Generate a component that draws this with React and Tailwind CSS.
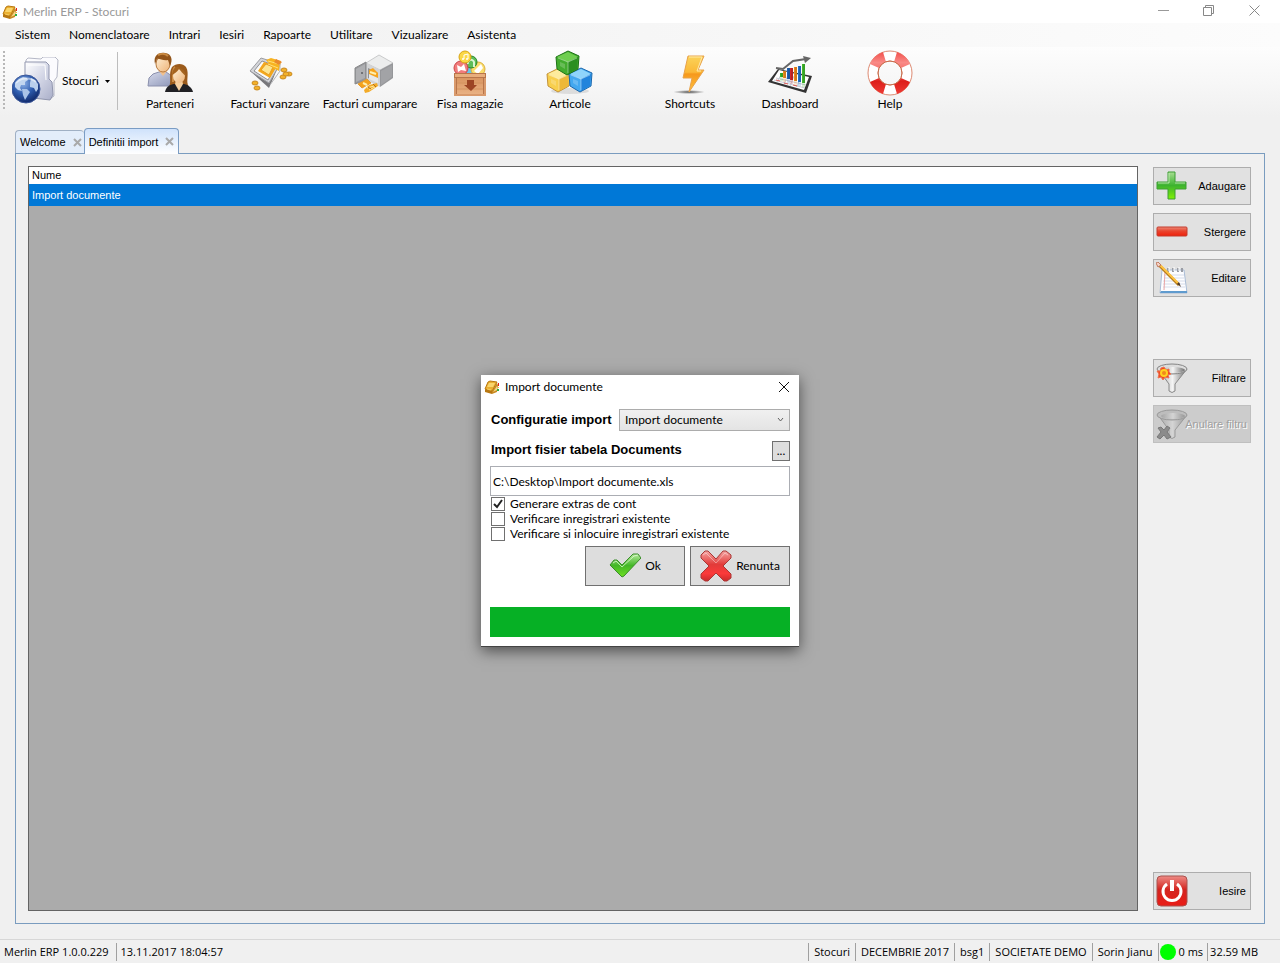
import { useState } from 'react';

const menus = ['Sistem', 'Nomenclatoare', 'Intrari', 'Iesiri', 'Rapoarte', 'Utilitare', 'Vizualizare', 'Asistenta'];

/* ── Icons ─────────────────────────────────────────────────────────── */

function BookIcon() {
  return (
    <svg width="16" height="16" viewBox="0 0 16 16" aria-hidden="true">
      <path d="M1 10 8 12 8 15 1 13Z" fill="#b87812" />
      <path d="M8 12 13 4 14 6 13 13 8 15Z" fill="#c98a22" />
      <path d="M9 13 13 7 13 11Z" fill="#f3d88a" />
      <path d="M4 3 6 2 13 3 12 5 8 12 1 10Z" fill="#eaaf30" stroke="#b9780f" strokeWidth="1" strokeLinejoin="round" />
      <path d="M5 4 11 4 9 8 3 8Z" fill="#f9d56c" />
      <path d="M3 10 7 11" stroke="#f8cf62" strokeWidth="1" />
      <path d="M14 4h1v3h-1z" fill="#e2231a" />
      <path d="M14 8h1v1h-1z" fill="#f2c22b" />
      <path d="M13 10h2v2h-2z" fill="#2cae3d" />
    </svg>
  );
}

function FolderGlobeIcon() {
  return (
    <svg width="48" height="48" viewBox="0 0 48 48" aria-hidden="true">
      <defs>
        <linearGradient id="folder" x1="0" x2="1" y1="0" y2="1">
          <stop offset="0" stopColor="#ffffff" />
          <stop offset=".5" stopColor="#d3d6e6" />
          <stop offset="1" stopColor="#a9aec8" />
        </linearGradient>
        <radialGradient id="globe" cx=".4" cy=".3" r=".75">
          <stop offset="0" stopColor="#8eb2e8" />
          <stop offset=".5" stopColor="#2e5cae" />
          <stop offset="1" stopColor="#0d2362" />
        </radialGradient>
      </defs>
      <path d="M14 3 16 1 29 2 31 0 43 0 46 3 45 20 42 24 42 39 38 42 14 40Z" fill="#fbfbfe" stroke="#b5b8c6" strokeWidth="1" />
      <path d="M13 5 34 5 37 8 37 22 40 25 41 38 38 43 13 40Z" fill="url(#folder)" stroke="#9196ae" strokeWidth="1" />
      <path d="M16 8 33 8 34 23" fill="none" stroke="#fff" strokeWidth="1" />
      <circle cx="14" cy="32" r="14" fill="url(#globe)" stroke="#3d599b" strokeWidth="1" />
      <path d="M3 26 7 22 11 20 15 21 16 23 13 25 13 28 9 28 8 31 10 34 6 33 3 30Z" fill="#c2d6f0" />
      <path d="M10 32 15 32 18 35 16 38 13 43 11 38Z" fill="#a9c3e8" />
      <path d="M19 21 23 23 26 27 26 32 24 35 22 31 18 30 18 26Z" fill="#b9cfed" />
      <path d="M4 26a12 9 0 0 1 20 -1" fill="none" stroke="#fff" strokeOpacity=".5" strokeWidth="2" />
    </svg>
  );
}

function PartnersIcon() {
  return (
    <svg width="48" height="48" viewBox="0 0 48 48" aria-hidden="true">
      <defs>
        <linearGradient id="shirt" x1="0" x2="1" y1="0" y2="1">
          <stop offset="0" stopColor="#d5d9ea" />
          <stop offset="1" stopColor="#8d96b8" />
        </linearGradient>
        <linearGradient id="skin" x1="0" x2="1" y1="0" y2="1">
          <stop offset="0" stopColor="#fff0d6" />
          <stop offset="1" stopColor="#eeb377" />
        </linearGradient>
      </defs>
      <path d="M2 36 3 28 7 24 13 22 20 22 26 26 27 36Z" fill="url(#shirt)" stroke="#8b90ad" strokeWidth="1" />
      <path d="M13 21 17 26 21 21 21 18 13 18Z" fill="#f1c08c" />
      <ellipse cx="17" cy="14" rx="7" ry="8" fill="url(#skin)" stroke="#b77a3f" strokeWidth="1" />
      <path d="M9 14C7 5 13 2 19 3 26 4 27 10 24 16L22 10C17 11 13 8 11 9Z" fill="#93551a" />
      <path d="M12 5C16 3 20 4 22 6" fill="none" stroke="#c98a42" strokeWidth="2" />
      <path d="M23 37C26 31 22 24 26 17 30 13 37 13 40 17 44 24 39 31 43 37L33 40Z" fill="#9b5b1c" />
      <path d="M27 32C27 25 26 20 29 17" fill="none" stroke="#cd8e45" strokeWidth="2" />
      <path d="M19 42C20 36 25 34 29 34L38 34C43 35 46 38 47 42Z" fill="#202024" />
      <path d="M29 34 33 41 37 34 36 30 30 30Z" fill="#f5cf9f" />
      <ellipse cx="33" cy="26" rx="6" ry="7" fill="url(#skin)" />
      <path d="M26 25C27 17 31 15 34 18 36 19 39 20 40 26 36 23 35 21 33 19 31 22 29 23 26 25Z" fill="#a5641f" />
    </svg>
  );
}

function CashIcon() {
  return (
    <svg width="48" height="48" viewBox="0 0 48 48" aria-hidden="true">
      <path d="M4 21 15 9 33 15 23 38Z" fill="#77777a" />
      <path d="M4 21 15 8 34 14 23 33Z" fill="#d5d6da" stroke="#9c9da2" strokeWidth="1" />
      <path d="M8 21 16 11 30 16 22 30Z" fill="#fafafa" stroke="#8f9094" strokeWidth="1" />
      <path d="M12 21 18 12 31 16 24 28Z" fill="#f5a81c" />
      <path d="M15 20 20 14 27 17 23 25Z" fill="#fde48f" stroke="#e79d20" strokeWidth="1" />
      <path d="M20 10 25 8 35 11 33 21 27 18Z" fill="#f8b320" />
      <path d="M22 11 33 14M22 14 32 18" stroke="#ffdf78" strokeWidth="1" />
      <path d="M30 9 36 12 33 15 28 12Z" fill="#e98a2c" />
      <path d="M24 35 34 21 34 14" fill="none" stroke="#b4b5b8" strokeWidth="1" />
      <g fill="#f3b12a" stroke="#c98a24" strokeWidth="1">
        <ellipse cx="38" cy="20" rx="3" ry="2" />
        <ellipse cx="37" cy="27" rx="3" ry="2" />
        <ellipse cx="43" cy="24" rx="3" ry="2" />
        <ellipse cx="40" cy="24" rx="3" ry="2" />
        <ellipse cx="9" cy="33" rx="3" ry="2" />
        <ellipse cx="11" cy="38" rx="3" ry="2" />
      </g>
    </svg>
  );
}

function SafeIcon() {
  return (
    <svg width="48" height="48" viewBox="0 0 48 48" aria-hidden="true">
      <path d="M20 13 33 5 47 13 34 20Z" fill="#eceded" stroke="#c9cacb" strokeWidth="1" />
      <path d="M20 13 34 20 34 37 20 30Z" fill="#d3d4d6" />
      <path d="M34 20 47 13 47 28 34 37Z" fill="#96979a" />
      <path d="M35 21 46 15 46 27 35 35Z" fill="#a2a3a6" />
      <path d="M22 18 32 23 32 32 22 28Z" fill="#909194" />
      <path d="M23 20 27 18 32 23 32 28 23 25Z" fill="#f7a41d" />
      <path d="M23 24 32 28 32 33 23 29Z" fill="#e8e9ea" />
      <path d="M24 22 30 24" stroke="#fff0b0" strokeWidth="2" />
      <path d="M9 18 20 12 20 30 9 34Z" fill="#97989b" stroke="#88898b" strokeWidth="1" />
      <path d="M10 19 19 14 19 28 10 32Z" fill="#aeafb2" />
      <circle cx="16" cy="23" r="1" fill="#5d5e61" />
      <path d="M12 34 21 29 25 33 16 38Z" fill="#f5a21b" stroke="#e09a35" strokeWidth="1" />
      <path d="M17 33 21 35" stroke="#fff0b0" strokeWidth="2" />
      <path d="M18 40 23 35 31 33 32 36 23 42 19 43Z" fill="#f3ab28" />
      <path d="M21 38 28 36M23 40 29 37" stroke="#fdeaa0" strokeWidth="1" />
      <path d="M22 37 25 39M27 34 30 37" stroke="#ba6d0c" strokeWidth="1" />
    </svg>
  );
}

function CrateIcon() {
  return (
    <svg width="48" height="48" viewBox="0 0 48 48" aria-hidden="true">
      <defs>
        <linearGradient id="wood" x1="0" x2="0" y1="0" y2="1">
          <stop offset="0" stopColor="#d99561" />
          <stop offset="1" stopColor="#e9b183" />
        </linearGradient>
      </defs>
      <circle cx="23" cy="22" r="5" fill="#67c5ec" />
      <circle cx="32" cy="19" r="7" fill="#f9dc6c" stroke="#ddb13c" strokeWidth="1" />
      <path d="M28 21 35 14 37 18 32 24Z" fill="#fff" />
      <circle cx="25" cy="12" r="6" fill="#5dbd58" stroke="#278527" strokeWidth="1" />
      <path d="M22 14a3 3 0 0 1 6-2v5" fill="none" stroke="#d8f5d3" strokeWidth="2" />
      <circle cx="15" cy="18" r="7" fill="#f07c7c" stroke="#cd4548" strokeWidth="1" />
      <path d="M11 15 15 17 18 14 20 21 15 20 12 22Z" fill="#fff" />
      <circle cx="19" cy="7" r="6" fill="#fbd846" stroke="#d9a514" strokeWidth="1" />
      <path d="M18 9V5l4-1v5" fill="none" stroke="#fff" strokeWidth="1" />
      <circle cx="17" cy="9" r="1" fill="#fff" />
      <circle cx="21" cy="9" r="1" fill="#fff" />
      <path d="M8 23H40V46H8Z" fill="#b8754a" />
      <path d="M9 24H39V27H9Z" fill="#e8ae7d" />
      <path d="M11 28H37V44H11Z" fill="url(#wood)" />
      <path d="M9 28V45H39V28" fill="none" stroke="#d99a6c" strokeWidth="2" />
      <path d="M11 33H37M11 39H37" stroke="#d3925f" strokeWidth="1" />
      <path d="M21 30H28V35H31L25 41 18 35H21Z" fill="#9c4524" />
    </svg>
  );
}

function Cube({ x, y, top, left, right, edge }) {
  return (
    <g transform={`translate(${x} ${y})`}>
      <path d="M12 0 23 5 22 18 11 24 1 18 0 6Z" fill={left} stroke={edge} strokeWidth="1" strokeLinejoin="round" />
      <path d="M12 1 22 6 12 11 1 6Z" fill={top} />
      <path d="M12 11 22 6 21 18 12 23Z" fill={right} />
      <path d="M2 7 12 11 21 7M12 11V22" fill="none" stroke="#fff" strokeOpacity=".4" strokeWidth="1" />
      <path d="M4 11 9 13 9 18 4 15Z" fill="#fff" fillOpacity=".2" />
    </g>
  );
}

function CubesIcon() {
  return (
    <svg width="48" height="48" viewBox="0 0 48 48" aria-hidden="true">
      <ellipse cx="24" cy="41" rx="19" ry="3" fill="#000" fillOpacity=".1" />
      <Cube x={1} y={18} top="#fdeb9d" left="#f8cf4d" right="#edb838" edge="#c3923a" />
      <Cube x={23} y={18} top="#8fd4fb" left="#43a8f0" right="#2184dc" edge="#1c68ae" />
      <Cube x={10} y={1} top="#6fce50" left="#43ac2e" right="#2b8f20" edge="#1e7317" />
    </svg>
  );
}

function BoltIcon() {
  return (
    <svg width="48" height="48" viewBox="0 0 48 48" aria-hidden="true">
      <defs>
        <linearGradient id="bolt" x1="0" x2="0" y1="0" y2="1">
          <stop offset="0" stopColor="#fbd35a" />
          <stop offset=".45" stopColor="#fbb837" />
          <stop offset=".5" stopColor="#f6981c" />
          <stop offset="1" stopColor="#ffc43e" />
        </linearGradient>
        <radialGradient id="boltShadow">
          <stop offset="0" stopColor="#555" />
          <stop offset="1" stopColor="#555" stopOpacity="0" />
        </radialGradient>
      </defs>
      <ellipse cx="23" cy="42" rx="16" ry="2" fill="url(#boltShadow)" />
      <path d="M22 6H38L32 20H38L23 42 26 28H17Z" fill="url(#bolt)" stroke="#e8a24a" strokeWidth="1" strokeLinejoin="round" />
      <path d="M23 7H36L31 21H35" fill="none" stroke="#ffe9a8" strokeWidth="1" />
    </svg>
  );
}

function ChartIcon() {
  const bars = [
    [14, 23, 4, '#37b52c'],
    [17, 21, 7, '#f08c1d'],
    [21, 18, 11, '#1f62b4'],
    [24, 18, 12, '#d3272b'],
    [28, 17, 14, '#f08c1d'],
    [32, 16, 16, '#2372c8'],
    [36, 14, 19, '#42b92c'],
  ];
  return (
    <svg width="48" height="48" viewBox="0 0 48 48" aria-hidden="true">
      <path d="M12 19 46 26 40 43 2 32Z" fill="#333" />
      <path d="M13 20 43 27 38 40 6 31Z" fill="#fff" />
      <path d="M10 28 40 35M8 30 39 38M16 23 11 32M22 25 18 34M28 26 24 36M34 28 31 37" stroke="#c5c9d3" strokeWidth="1" />
      <path d="M10 30 14 31M18 33 22 34M27 35 31 36" stroke="#de5a55" strokeWidth="1" />
      {bars.map(([x, y, h, color]) => (
        <g key={x}>
          <rect x={x} y={y} width="3" height={h} fill={color} />
          <path d={`M${x} ${y + h}h3v4h-3z`} fill={color} fillOpacity=".2" />
          <path d={`M${x + 2} ${y}v${h}`} stroke="#000" strokeOpacity=".25" strokeWidth="1" />
        </g>
      ))}
      <path d="M10 18 17 19 27 11 40 9" fill="none" stroke="#666" strokeWidth="2" />
      <path d="M37 6 45 8 39 13Z" fill="#666" />
    </svg>
  );
}

function LifebuoyIcon() {
  return (
    <svg width="48" height="48" viewBox="0 0 48 48" aria-hidden="true">
      <defs>
        <linearGradient id="buoy" x1="0" x2="0" y1="0" y2="1">
          <stop offset="0" stopColor="#f2504c" />
          <stop offset=".25" stopColor="#f98a86" />
          <stop offset=".5" stopColor="#f46560" />
          <stop offset=".7" stopColor="#dd1f1b" />
          <stop offset="1" stopColor="#ee3a34" />
        </linearGradient>
      </defs>
      <path fillRule="evenodd" d="M24 1a22 22 0 1 1 0 44 22 22 0 0 1 0-44Zm0 10a12 12 0 1 0 0 24 12 12 0 0 0 0-24Z" fill="#fff" stroke="#dd8a72" strokeWidth="1" />
      <path
        fill="url(#buoy)"
        d="M31 2 A22 22 0 0 1 44 14 L35 18 A12 12 0 0 0 28 12Z M44 32 A22 22 0 0 1 31 44 L28 34 A12 12 0 0 0 35 28Z M17 44 A22 22 0 0 1 4 32 L13 28 A12 12 0 0 0 20 34Z M4 14 A22 22 0 0 1 17 2 L20 12 A12 12 0 0 0 13 18Z"
      />
      <circle cx="24" cy="23" r="12" fill="none" stroke="#c76f4d" strokeWidth="1" />
    </svg>
  );
}

function PlusIcon() {
  return (
    <svg width="32" height="32" viewBox="0 0 32 32" aria-hidden="true">
      <defs>
        <linearGradient id="plus" x1="0" x2="0" y1="0" y2="1">
          <stop offset="0" stopColor="#a8dd93" />
          <stop offset=".5" stopColor="#3db32f" />
          <stop offset="1" stopColor="#7ff205" />
        </linearGradient>
      </defs>
      <path d="M12 2H19V12H30V19H19V29H12V19H1V12H12Z" fill="url(#plus)" stroke="#3d9d35" strokeWidth="1" strokeLinejoin="round" />
      <path d="M13 3V13H2M19 13H29" fill="none" stroke="#d8f5cd" strokeOpacity=".7" strokeWidth="1" />
    </svg>
  );
}

function MinusIcon() {
  return (
    <svg width="32" height="32" viewBox="0 0 32 32" aria-hidden="true">
      <defs>
        <linearGradient id="minus" x1="0" x2="0" y1="0" y2="1">
          <stop offset="0" stopColor="#ee8a78" />
          <stop offset=".45" stopColor="#e8452f" />
          <stop offset="1" stopColor="#f0200a" />
        </linearGradient>
      </defs>
      <rect x="1" y="11" width="30" height="9" rx="1" fill="url(#minus)" stroke="#c43a2c" strokeWidth="1" />
    </svg>
  );
}

function NotepadIcon() {
  return (
    <svg width="32" height="32" viewBox="0 0 32 32" aria-hidden="true">
      <path d="M6 8H28L31 31H4Z" fill="#fdfdff" stroke="#a9bcd6" strokeWidth="1" />
      <path d="M5 29H31V31H4Z" fill="#5f9bce" />
      <path d="M8 13H28M8 16H28M7 19H29M7 22H29M7 25H29" stroke="#d5dcea" strokeWidth="1" />
      <path d="M9 9 8 28" stroke="#e9a5a5" strokeWidth="1" />
      <path d="M12 10V6M17 10V6M22 10V6M26 10V6" stroke="#9a9da5" strokeWidth="2" />
      <path d="M13 9V5M18 9V5M23 9V5" stroke="#fff" strokeWidth="1" />
      <path d="M2 2 23 23" stroke="#b57a18" strokeWidth="3" />
      <path d="M3 2 22 21" stroke="#ffc444" strokeWidth="2" />
      <path d="M0 1 2 0 5 3 2 5Z" fill="#f5d4c7" stroke="#c1795f" strokeWidth="1" />
      <path d="M21 22 23 20 25 25Z" fill="#4a382b" />
    </svg>
  );
}

function FunnelIcon({ clear }) {
  const id = clear ? 'funnelOff' : 'funnel';
  return (
    <svg width="32" height="32" viewBox="0 0 32 32" aria-hidden="true">
      <defs>
        <linearGradient id={id} x1="0" x2="1" y1="0" y2="0">
          <stop offset="0" stopColor={clear ? '#a5a5a5' : '#a0a0a0'} />
          <stop offset=".5" stopColor={clear ? '#d4d4d4' : '#f4f4f4'} />
          <stop offset="1" stopColor={clear ? '#979797' : '#6d6d6d'} />
        </linearGradient>
      </defs>
      <path d="M2 7 13 22 13 29 Q16 32 19 29 L19 22 31 7Z" fill={`url(#${id})`} stroke={clear ? '#999' : '#888'} strokeWidth="1" />
      <ellipse cx="16" cy="7" rx="15" ry="5" fill={clear ? '#bdbdbd' : '#dcdcdc'} stroke={clear ? '#999' : '#858585'} strokeWidth="1" />
      <ellipse cx="17" cy="8" rx="12" ry="3" fill={`url(#${id})`} />
      {clear ? (
        <path d="M2 20 5 19 8 22 11 18 14 20 11 24 15 29 11 31 8 27 4 31 1 29 5 24Z" fill="#8b8b8b" stroke="#787878" strokeWidth="1" />
      ) : (
        <>
          <path d="M8 5 10 8 13 7 13 10 15 12 12 13 13 16 9 15 7 18 5 15 2 16 3 12 1 9 4 9 5 6Z" fill="#ee4b22" stroke="#f0704b" strokeWidth="1" />
          <circle cx="8" cy="11" r="4" fill="#ffd21f" />
          <circle cx="8" cy="11" r="2" fill="#f18a1c" />
        </>
      )}
    </svg>
  );
}

function PowerIcon() {
  return (
    <svg width="32" height="32" viewBox="0 0 32 32" aria-hidden="true">
      <defs>
        <linearGradient id="power" x1="0" x2="0" y1="0" y2="1">
          <stop offset="0" stopColor="#ee8c86" />
          <stop offset=".45" stopColor="#d32520" />
          <stop offset="1" stopColor="#ea1c16" />
        </linearGradient>
      </defs>
      <rect x="1" y="1" width="30" height="30" rx="4" fill="url(#power)" stroke="#a9524e" strokeWidth="1" />
      <path d="M11 9a9 9 0 1 0 10 0" fill="none" stroke="#fff" strokeWidth="3" />
      <path d="M16 5V16" stroke="#fff" strokeWidth="4" />
    </svg>
  );
}

function CheckIcon() {
  return (
    <svg width="32" height="32" viewBox="0 0 32 32" aria-hidden="true">
      <defs>
        <linearGradient id="check" x1="0" x2="0" y1="0" y2="1">
          <stop offset="0" stopColor="#b5e99c" />
          <stop offset=".5" stopColor="#43b727" />
          <stop offset="1" stopColor="#6fe022" />
        </linearGradient>
      </defs>
      <path d="M1 15 5 10 8 10 13 15 24 4 29 4 32 8 15 26 13 27Z" fill="url(#check)" stroke="#3a8c2a" strokeWidth="1" strokeLinejoin="round" />
      <path d="M4 13 7 11 13 17 25 6 29 5" fill="none" stroke="#eaffdf" strokeOpacity=".7" strokeWidth="1" />
    </svg>
  );
}

function CancelIcon() {
  return (
    <svg width="32" height="32" viewBox="0 0 32 32" aria-hidden="true">
      <defs>
        <linearGradient id="cancel" x1="0" x2="0" y1="0" y2="1">
          <stop offset="0" stopColor="#f5a6a3" />
          <stop offset=".45" stopColor="#e23b39" />
          <stop offset=".75" stopColor="#fb3a3a" />
          <stop offset="1" stopColor="#c92b2b" />
        </linearGradient>
      </defs>
      <path
        d="M5 1 8 1 16 9 23 1 26 1 31 5 31 8 23 16 31 24 31 28 27 31 24 31 16 23 8 31 5 31 1 28 1 24 9 16 1 8 1 5Z"
        fill="url(#cancel)"
        stroke="#a93836"
        strokeWidth="1"
        strokeLinejoin="round"
      />
      <path d="M3 5 6 3 16 13 25 3 28 5" fill="none" stroke="#fff" strokeOpacity=".4" strokeWidth="1" />
    </svg>
  );
}

/* ── Parts ─────────────────────────────────────────────────────────── */

const tools = [
  { label: 'Parteneri', icon: <PartnersIcon /> },
  { label: 'Facturi vanzare', icon: <CashIcon /> },
  { label: 'Facturi cumparare', icon: <SafeIcon /> },
  { label: 'Fisa magazie', icon: <CrateIcon /> },
  { label: 'Articole', icon: <CubesIcon /> },
  { label: 'Shortcuts', icon: <BoltIcon />, gap: true },
  { label: 'Dashboard', icon: <ChartIcon /> },
  { label: 'Help', icon: <LifebuoyIcon /> },
];

function SideButton({ icon, label, disabled }) {
  return (
    <button
      type="button"
      disabled={disabled}
      className={`flex h-[38px] w-full items-center justify-between border pl-0.5 font-['Liberation_Sans',sans-serif] text-[11px] ${
        disabled
          ? 'border-[#bfbfbf] bg-[#cccccc] pr-[3px] text-[#a0a0a0] [text-shadow:1px_1px_0_#fff]'
          : 'border-[#adadad] bg-[#e1e1e1] pr-1'
      }`}
    >
      <span className="shrink-0">{icon}</span>
      <span className={`whitespace-nowrap ${disabled ? '-ml-2' : ''}`}>{label}</span>
    </button>
  );
}

function Tab({ label, active }) {
  return (
    <div
      className={`flex items-center gap-[7px] rounded-t border border-b-0 ${
        active
          ? '-mb-px h-[26px] border-[#7a9cc4] bg-linear-to-b from-[#cfe2fb] to-white px-1'
          : 'h-[23px] border-r-0 border-[#a0b0c4] bg-[#e3edfa] pr-0.5 pl-1'
      }`}
    >
      <button type="button" role="tab" aria-selected={!!active} className="whitespace-nowrap">
        {label}
      </button>
      <button type="button" aria-label={`Inchide ${label}`}>
        <svg width="9" height="9" viewBox="0 0 9 9" aria-hidden="true">
          <path d="M1 1 8 8M8 1 1 8" stroke="#a9a9a9" strokeWidth="2" />
        </svg>
      </button>
    </div>
  );
}

function CheckRow({ label, checked, onChange }) {
  return (
    <label className="flex h-[15px] items-center gap-[5px] whitespace-nowrap">
      <span className="relative ml-px flex size-3.5">
        <input
          type="checkbox"
          checked={checked}
          onChange={onChange}
          className="size-3.5 appearance-none border border-[#707070] bg-white"
        />
        {checked && (
          <svg className="pointer-events-none absolute inset-0" width="14" height="14" viewBox="0 0 14 14" aria-hidden="true">
            <path d="M3 7 6 10 11 3" fill="none" stroke="#222" strokeWidth="2" />
          </svg>
        )}
      </span>
      {label}
    </label>
  );
}

function ImportDialog() {
  const [path, setPath] = useState('C:\\Desktop\\Import documente.xls');
  const [options, setOptions] = useState([
    { label: 'Generare extras de cont', checked: true },
    { label: 'Verificare inregistrari existente', checked: false },
    { label: 'Verificare si inlocuire inregistrari existente', checked: false },
  ]);
  const progress = 100;

  const toggle = (index) =>
    setOptions(options.map((o, i) => (i === index ? { ...o, checked: !o.checked } : o)));

  return (
    <div
      role="dialog"
      aria-label="Import documente"
      className="absolute top-[375px] left-1/2 w-[318px] -translate-x-1/2 border-b border-[#444] bg-white shadow-[0_4px_14px_rgba(0,0,0,0.55)]"
    >
      <div className="flex h-6 items-center pr-2 pl-[3px]">
        <BookIcon />
        <span className="ml-[5px] flex-1">Import documente</span>
        <button type="button" aria-label="Close" className="p-px">
          <svg width="12" height="12" viewBox="0 0 12 12" aria-hidden="true">
            <path d="M1 1 11 11M11 1 1 11" stroke="#111" strokeWidth="1" />
          </svg>
        </button>
      </div>

      <div className="px-[9px] pt-2.5 pb-[9px]">
        <div className="flex items-center justify-between">
          <label htmlFor="config" className="pl-px font-['Liberation_Sans',sans-serif] text-[13px] font-bold whitespace-nowrap">
            Configuratie import
          </label>
          <div className="relative w-[171px] shrink-0">
            <select
              id="config"
              className="block h-[22px] w-full appearance-none border border-[#acacac] bg-linear-to-b from-[#f0f0f0] to-[#e4e4e4] pl-[5px]"
            >
              <option>Import documente</option>
            </select>
            <svg className="pointer-events-none absolute top-2 right-1.5" width="7" height="6" viewBox="0 0 7 6" aria-hidden="true">
              <path d="M1 1 3.500 4 6 1" fill="none" stroke="#606060" strokeWidth="1" />
            </svg>
          </div>
        </div>

        <div className="mt-2.5 flex items-start justify-between">
          <label htmlFor="file" className="pl-px font-['Liberation_Sans',sans-serif] text-[13px] font-bold whitespace-nowrap">
            Import fisier tabela Documents
          </label>
          <button type="button" className="h-5 w-[18px] border border-[#707070] bg-[#dddddd]">
            ...
          </button>
        </div>

        <input
          id="file"
          type="text"
          value={path}
          onChange={(e) => setPath(e.target.value)}
          className="mt-[5px] block h-[30px] w-full border border-[#abadb3] bg-white px-0.5"
        />

        {options.map((option, i) => (
          <CheckRow key={option.label} {...option} onChange={() => toggle(i)} />
        ))}

        <div className="mt-[5px] flex justify-end gap-[5px]">
          <button type="button" className="flex h-10 w-[100px] items-center justify-center gap-1 border border-[#707070] bg-[#dddddd]">
            <CheckIcon />
            Ok
          </button>
          <button type="button" className="flex h-10 w-[100px] items-center justify-center gap-1 border border-[#707070] bg-[#dddddd]">
            <CancelIcon />
            Renunta
          </button>
        </div>

        <div role="progressbar" aria-label="Import" aria-valuenow={progress} className="mt-[21px] h-[30px] bg-[#e6e6e6]">
          <div className="h-full bg-[#06b025]" style={{ width: `${progress}%` }} />
        </div>
      </div>
    </div>
  );
}

function StatusBar() {
  return (
    <footer className="flex h-6 items-center border-t border-[#d7d7d7] pr-[22px] pl-1 font-['Open_Sans',sans-serif] text-[11px] whitespace-nowrap">
      <span className="pr-[7px]">Merlin ERP 1.0.0.229</span>
      <span className="border-l border-[#a0a0a0] pl-1">13.11.2017 18:04:57</span>
      <span className="flex-1" />
      {['Stocuri', 'DECEMBRIE 2017', 'bsg1', 'SOCIETATE DEMO', 'Sorin Jianu'].map((text) => (
        <span key={text} className="border-l border-[#a0a0a0] px-[5px]">
          {text}
        </span>
      ))}
      <span className="flex items-center gap-[3px] border-l border-[#a0a0a0] pr-1 pl-px">
        <span className="size-4 rounded-full bg-[#00ff00]" />
        0 ms
      </span>
      <span className="border-l border-[#a0a0a0] pl-0.5">32.59 MB</span>
    </footer>
  );
}

/* ── Window ────────────────────────────────────────────────────────── */

export default function App() {
  return (
    <div className="relative flex h-screen flex-col overflow-hidden bg-[#f0f0f0] font-['Lato',sans-serif] text-[12px] leading-[18px] text-black">
      <header className="flex h-[23px] shrink-0 items-center bg-white px-0.5 text-[#999]">
        <BookIcon />
        <h1 className="ml-[5px] flex-1">Merlin ERP - Stocuri</h1>
        <div className="flex h-full">
          <button type="button" aria-label="Minimize" className="flex w-[46px] items-center justify-center">
            <svg width="11" height="11" viewBox="0 0 11 11" aria-hidden="true">
              <path d="M0 4.500H11" stroke="#999" strokeWidth="1" />
            </svg>
          </button>
          <button type="button" aria-label="Restore" className="flex w-[46px] items-start pt-[5px] pl-[17px]">
            <svg width="11" height="11" viewBox="0 0 11 11" aria-hidden="true">
              <path d="M.5 2.500H8.500V10.500H.5ZM2.500 2.500V.5H10.500V8.500H8.500" fill="none" stroke="#888" strokeWidth="1" />
            </svg>
          </button>
          <button type="button" aria-label="Close" className="flex w-[46px] items-start pt-[5px] pl-[17px]">
            <svg width="11" height="11" viewBox="0 0 11 11" aria-hidden="true">
              <path d="M.5.5 10.500 10.500M10.500.5.5 10.500" stroke="#888" strokeWidth="1" />
            </svg>
          </button>
        </div>
      </header>

      <nav className="flex h-6 shrink-0 items-center gap-[19px] bg-linear-to-r from-[#f0f0f0] to-[#fcfcfc] pl-[15px]">
        {menus.map((item) => (
          <button key={item} type="button">
            {item}
          </button>
        ))}
      </nav>

      <div className="flex h-[70px] shrink-0 bg-linear-to-b from-[#fdfdfd] via-[#f7f7f7] to-[#f0f0f0] pl-[3px]">
        <div className="mt-1 h-[58px] border-l-2 border-dotted border-[#b8b8b8]" />
        <button type="button" className="ml-[7px] flex h-[68px] w-[98px] items-center">
          <FolderGlobeIcon />
          <span className="ml-0.5">Stocuri</span>
          <svg className="ml-auto" width="5" height="3" viewBox="0 0 5 3" aria-hidden="true">
            <path d="M0 0H5L2.500 3Z" fill="#000" />
          </svg>
        </button>
        <div className="mt-[5px] ml-[7px] h-[58px] border-l border-[#bdbdbd]" />
        <div className="ml-0.5 flex">
          {tools.map((tool) => (
            <button
              key={tool.label}
              type="button"
              className={`flex w-[100px] flex-col items-center pt-[3px] whitespace-nowrap ${tool.gap ? 'ml-5' : ''}`}
            >
              {tool.icon}
              <span className="-mt-[3px]">{tool.label}</span>
            </button>
          ))}
        </div>
      </div>

      <main className="flex min-h-0 flex-1 flex-col px-[15px] pt-[11px] pb-[15px]">
        <div role="tablist" className="relative flex items-end font-['Liberation_Sans',sans-serif] text-[11px]">
          <Tab label="Welcome" />
          <Tab label="Definitii import" active />
        </div>

        <div className="flex min-h-0 flex-1 gap-[15px] border border-[#7a9cbf] p-3 pr-[13px]">
          <div className="flex-1 border border-[#646464] bg-[#ababab] font-['Liberation_Sans',sans-serif] text-[11px]">
            <table className="w-full border-collapse text-left">
              <thead>
                <tr className="h-[17px] bg-white">
                  <th className="px-[3px] leading-[17px] font-normal">Nume</th>
                </tr>
              </thead>
              <tbody>
                <tr className="h-[22px] bg-[#0078d7] text-white">
                  <td className="px-[3px]">Import documente</td>
                </tr>
              </tbody>
            </table>
          </div>

          <aside className="flex w-[98px] shrink-0 flex-col gap-2 py-px">
            <SideButton icon={<PlusIcon />} label="Adaugare" />
            <SideButton icon={<MinusIcon />} label="Stergere" />
            <SideButton icon={<NotepadIcon />} label="Editare" />
            <div className="mt-[54px] flex flex-col gap-2">
              <SideButton icon={<FunnelIcon />} label="Filtrare" />
              <SideButton icon={<FunnelIcon clear />} label="Anulare filtru" disabled />
            </div>
            <div className="mt-auto">
              <SideButton icon={<PowerIcon />} label="Iesire" />
            </div>
          </aside>
        </div>
      </main>

      <StatusBar />

      <ImportDialog />
    </div>
  );
}
